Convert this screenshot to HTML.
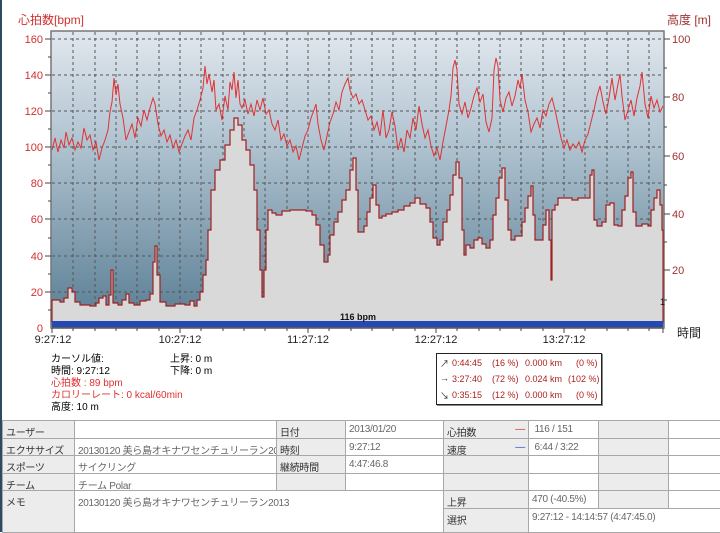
<!DOCTYPE html>
<html><head><meta charset="utf-8"><style>
body{margin:0;width:720px;height:532px;overflow:hidden;background:#fff;font-family:"Liberation Sans","Noto Sans CJK JP",sans-serif;position:relative}
.t{position:absolute;font-size:10px;white-space:nowrap}
.r{color:#e03030}
.c{position:absolute;border-right:1px solid #a8a8a8;border-bottom:1px solid #a8a8a8;box-sizing:border-box;font-size:10px;letter-spacing:-0.3px;padding:3px 3px;color:#333;white-space:nowrap;overflow:hidden}
.g{background:#ececec}
.b{position:absolute;font-size:9px;color:#b02020;white-space:nowrap}
</style></head><body>
<div style="position:absolute;left:0;top:0;width:2px;height:532px;background:#2c4a66"></div>
<svg width="720" height="420" style="position:absolute;left:0;top:0" font-family="Liberation Sans, Noto Sans CJK JP, sans-serif">
<defs><linearGradient id="bg" x1="0" y1="0" x2="0" y2="1"><stop offset="0" stop-color="#e2e7ee"/><stop offset="0.35" stop-color="#b4c6d3"/><stop offset="1" stop-color="#577c92"/></linearGradient></defs>
<rect x="51" y="31" width="613" height="297" fill="url(#bg)" stroke="#777" stroke-width="1.5"/>
<g stroke="#555" stroke-dasharray="3,3" stroke-width="1">
<path d="M52 39H663M52 75H663M52 111H663M52 147H663M52 183H663M52 219H663M52 256H663M52 292H663"/>
<path d="M73 32V322M95 32V322M116 32V322M137 32V322M159 32V322M180 32V322M201 32V322M223 32V322M244 32V322M265 32V322M287 32V322M308 32V322M329 32V322M351 32V322M372 32V322M393 32V322M415 32V322M436 32V322M457 32V322M479 32V322M500 32V322M521 32V322M543 32V322M564 32V322M585 32V322M607 32V322M628 32V322M649 32V322"/>
</g>
<path fill="#d9d9d9" stroke="#a02020" stroke-width="1.2" d="M52 322V300H60V302H64V298H68V288H72V292H75V302H80V305H90V306H96V303H99V298H103V296H106V305H109V295H111V270H113V303H118V305H122V300H126V294H129V303H134V305H140V301H146V300H150V294H153V262H155V246H157V275H160V302H166V306H175V304H185V305H190V301H194V306H197V300H200V292H203V275H206V260H208V230H211V190H215V170H220V160H225V145H230V130H234V118H238V125H242V140H246V150H250V165H254V190H257V230H260V270H262V297H264V270H266V230H268V210H272V213H276V215H282V211H290V210H298V210H306V211H312V215H316V225H320V245H324V262H328V255H330V235H334V222H338V212H342V200H346V190H350V170H353V158H356V190H358V232H361V232H364V226H367V212H370V198H373V185H376V205H379V218H382V216H386V214H392V212H398V210H404V206H410V203H415V198H420V204H426V208H430V222H433V238H437V245H440V240H443V222H447V210H450V195H453V175H456V162H459V178H462V230H464V255H466V245H470V248H474V240H478V238H482V244H486V248H490V240H493V215H496V198H499V178H502V168H505V200H508V230H511V240H515V236H519V236H522V222H525V208H528V196H531V186H533V215H535V240H539V240H543V225H546V210H549V240H551V280H552V210H555V205H558V198H565V198H572V200H578V198H585V198H590V175H592V170H594V220H597V226H602V222H606V205H610V203H614V225H618V226H622V210H625V196H628V178H631V172H633V212H636V226H642V224H648V226H651V210H654V198H657V190H660V205H662V230H663V322Z"/>
<polyline fill="none" stroke="#e03232" stroke-width="1" points="52,150 55,138 58,152 61,140 64,148 66,132 69,145 72,138 75,150 78,142 81,148 84,128 87,140 90,135 93,150 96,142 99,160 102,148 105,140 108,130 110,112 112,102 114,78 116,95 118,84 120,104 123,118 126,140 129,132 132,124 135,138 138,118 141,126 144,110 147,120 150,108 153,98 155,104 158,124 161,136 164,130 167,142 170,135 173,148 176,140 179,152 182,144 185,136 188,130 191,140 194,118 197,110 200,100 203,88 205,66 207,84 209,74 212,92 214,80 216,110 219,104 222,120 225,96 228,110 230,82 232,90 234,72 236,98 238,80 240,104 242,108 245,100 248,114 251,104 254,116 257,100 260,110 263,98 266,114 269,110 272,124 275,130 278,120 281,140 284,134 287,146 290,140 293,152 296,146 299,160 302,148 305,136 308,130 311,118 314,110 316,104 318,124 321,140 324,150 327,136 330,122 333,114 336,102 339,110 342,92 345,84 348,78 350,90 353,98 356,94 359,104 362,100 365,110 368,120 371,116 374,130 377,122 380,136 383,110 386,138 389,130 392,112 395,126 398,150 401,138 404,152 407,130 410,138 413,118 416,130 419,106 422,124 425,138 428,130 431,146 434,156 437,148 440,160 443,142 446,126 449,110 451,96 453,68 455,60 457,70 459,104 462,114 465,102 468,118 471,108 474,96 477,88 480,102 483,94 486,122 489,132 492,118 494,70 496,58 498,66 500,100 503,112 506,98 509,92 512,106 515,96 518,80 520,88 522,74 525,100 528,112 531,132 534,124 537,118 540,128 543,110 546,116 549,104 552,98 555,110 558,124 561,138 564,148 567,140 570,150 573,144 576,148 579,142 582,152 585,140 588,134 591,122 594,110 597,96 600,86 603,102 606,114 609,98 612,78 615,100 618,84 620,74 622,96 625,120 628,110 631,100 634,116 637,98 640,86 642,72 645,104 648,118 651,96 654,108 657,100 660,112 663,106"/>
<rect x="52" y="321" width="611" height="6" fill="#2448b4"/>
<line x1="52" y1="328" x2="663" y2="328" stroke="#444"/>
<g stroke="#444"><path d="M52 328v5M73 328v3M95 328v3M116 328v3M137 328v3M159 328v3M180 328v5M201 328v3M223 328v3M244 328v3M265 328v3M287 328v3M308 328v5M329 328v3M351 328v3M372 328v3M393 328v3M415 328v3M436 328v5M457 328v3M479 328v3M500 328v3M521 328v3M543 328v3M564 328v5M585 328v3M607 328v3M628 328v3M649 328v3M663 328v5"/>
<path d="M45 39h6M45 75h6M45 111h6M45 147h6M45 183h6M45 219h6M45 256h6M45 292h6M48 57h3M48 93h3M48 129h3M48 165h3M48 201h3M48 238h3M48 274h3M48 310h3"/>
<path d="M664 39h6M664 97h6M664 156h6M664 214h6M664 270h6M664 68h3M664 127h3M664 185h3M664 242h3M664 300h3"/></g>
<g fill="#d03030" font-size="11" text-anchor="end">
<text x="43" y="43">160</text><text x="43" y="79">140</text><text x="43" y="115">120</text><text x="43" y="151">100</text><text x="43" y="187">80</text><text x="43" y="223">60</text><text x="43" y="260">40</text><text x="43" y="296">20</text><text x="43" y="332">0</text></g>
<g fill="#a03030" font-size="11"><text x="672" y="43">100</text><text x="672" y="101">80</text><text x="672" y="160">60</text><text x="672" y="218">40</text><text x="672" y="274">20</text></g>
<text x="18" y="24" fill="#d03030" font-size="12">心拍数[bpm]</text>
<text x="667" y="24" fill="#a03030" font-size="12">高度 [m]</text>
<text x="677" y="337" fill="#222" font-size="12">時間</text>
<text x="358" y="320" fill="#111" font-size="9" text-anchor="middle" font-weight="bold">116 bpm</text>
<text x="660" y="305" fill="#111" font-size="9">1</text>
<g fill="#222" font-size="11" text-anchor="middle"><text x="53" y="343">9:27:12</text><text x="180" y="343">10:27:12</text><text x="308" y="343">11:27:12</text><text x="436" y="343">12:27:12</text><text x="564" y="343">13:27:12</text></g>
</svg>
<div class="t" style="left:51px;top:350px">カーソル値:</div>
<div class="t" style="left:51px;top:362px">時間: 9:27:12</div>
<div class="t r" style="left:51px;top:374px">心拍数 : 89 bpm</div>
<div class="t r" style="left:51px;top:386px">カロリーレート: 0 kcal/60min</div>
<div class="t" style="left:51px;top:398px">高度: 10 m</div>
<div class="t" style="left:170px;top:350px">上昇: 0 m</div>
<div class="t" style="left:170px;top:362px">下降: 0 m</div>
<div style="position:absolute;left:436px;top:353px;width:164px;height:50px;border:1px solid #222;box-shadow:1px 1px 0 #888"></div>
<div class="b" style="left:440px;top:357px;color:#222">↗</div><div class="b" style="left:452px;top:358px">0:44:45</div><div class="b" style="left:492px;top:358px">(16 %)</div><div class="b" style="left:525px;top:358px">0.000 km</div><div class="b" style="left:576px;top:358px">(0 %)</div>
<div class="b" style="left:440px;top:373px;color:#222">→</div><div class="b" style="left:452px;top:374px">3:27:40</div><div class="b" style="left:492px;top:374px">(72 %)</div><div class="b" style="left:525px;top:374px">0.024 km</div><div class="b" style="left:568px;top:374px">(102 %)</div>
<div class="b" style="left:440px;top:389px;color:#222">↘</div><div class="b" style="left:452px;top:390px">0:35:15</div><div class="b" style="left:492px;top:390px">(12 %)</div><div class="b" style="left:525px;top:390px">0.000 km</div><div class="b" style="left:576px;top:390px">(0 %)</div>
<div style="position:absolute;left:2px;top:420px;width:718px;height:112px;border-top:1px solid #a8a8a8;border-left:1px solid #a8a8a8;background:#fff">
<div class="c g" style="left:0;top:0;width:72px;height:18px">ユーザー</div>
<div class="c" style="left:72px;top:0;width:202px;height:18px"></div>
<div class="c g" style="left:274px;top:0;width:69px;height:18px">日付</div>
<div class="c" style="left:343px;top:0;width:98px;height:18px;color:#666">2013/01/20</div>
<div class="c g" style="left:441px;top:0;width:85px;height:18px">心拍数 <span style="float:right;color:#d03030">—</span></div>
<div class="c" style="left:526px;top:0;width:70px;height:18px;color:#666">&nbsp;116 / 151</div>
<div class="c g" style="left:596px;top:0;width:70px;height:18px"></div>
<div class="c" style="left:666px;top:0;width:52px;height:18px"></div>
<div class="c g" style="left:0;top:18px;width:72px;height:17px">エクササイズ</div>
<div class="c" style="left:72px;top:18px;width:202px;height:17px;color:#666">20130120 美ら島オキナワセンチュリーラン20</div>
<div class="c g" style="left:274px;top:18px;width:69px;height:17px">時刻</div>
<div class="c" style="left:343px;top:18px;width:98px;height:17px;color:#666">9:27:12</div>
<div class="c g" style="left:441px;top:18px;width:85px;height:17px">速度 <span style="float:right;color:#3050c0">—</span></div>
<div class="c" style="left:526px;top:18px;width:70px;height:17px;color:#666">&nbsp;6:44 / 3:22</div>
<div class="c g" style="left:596px;top:18px;width:70px;height:17px"></div>
<div class="c" style="left:666px;top:18px;width:52px;height:17px"></div>
<div class="c g" style="left:0;top:35px;width:72px;height:18px">スポーツ</div>
<div class="c" style="left:72px;top:35px;width:202px;height:18px;color:#666">サイクリング</div>
<div class="c g" style="left:274px;top:35px;width:69px;height:18px">継続時間</div>
<div class="c" style="left:343px;top:35px;width:98px;height:18px;color:#666">4:47:46.8</div>
<div class="c g" style="left:441px;top:35px;width:85px;height:18px"></div>
<div class="c" style="left:526px;top:35px;width:70px;height:18px"></div>
<div class="c g" style="left:596px;top:35px;width:70px;height:18px"></div>
<div class="c" style="left:666px;top:35px;width:52px;height:18px"></div>
<div class="c g" style="left:0;top:53px;width:72px;height:17px">チーム</div>
<div class="c" style="left:72px;top:53px;width:202px;height:17px;color:#666">チーム Polar</div>
<div class="c g" style="left:274px;top:53px;width:69px;height:17px"></div>
<div class="c" style="left:343px;top:53px;width:98px;height:17px"></div>
<div class="c g" style="left:441px;top:53px;width:85px;height:17px"></div>
<div class="c" style="left:526px;top:53px;width:70px;height:17px"></div>
<div class="c g" style="left:596px;top:53px;width:70px;height:17px"></div>
<div class="c" style="left:666px;top:53px;width:52px;height:17px"></div>
<div class="c g" style="left:0;top:70px;width:72px;height:42px">メモ</div>
<div class="c" style="left:72px;top:70px;width:369px;height:42px;color:#666">20130120 美ら島オキナワセンチュリーラン2013</div>
<div class="c g" style="left:441px;top:70px;width:85px;height:18px">上昇</div>
<div class="c" style="left:526px;top:70px;width:70px;height:18px;color:#666">470 (-40.5%)</div>
<div class="c g" style="left:596px;top:70px;width:70px;height:18px"></div>
<div class="c" style="left:666px;top:70px;width:52px;height:18px"></div>
<div class="c g" style="left:441px;top:88px;width:85px;height:24px">選択</div>
<div class="c" style="left:526px;top:88px;width:192px;height:24px;color:#666">9:27:12 - 14:14:57 (4:47:45.0)</div>
</div>
</body></html>
